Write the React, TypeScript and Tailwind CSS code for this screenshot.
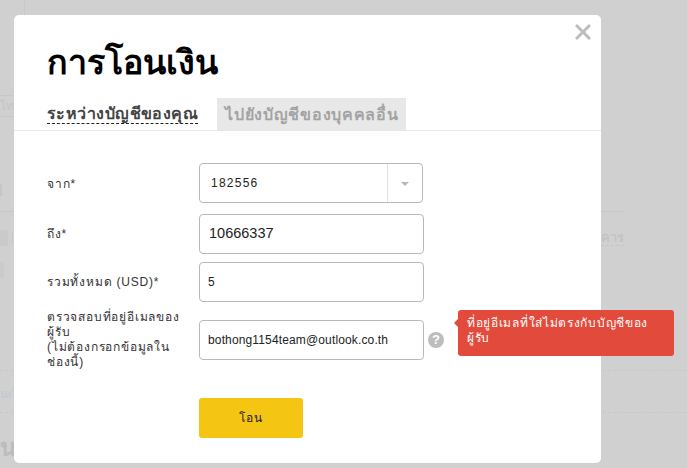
const fields = "flex items-center";
const inputBox = "h-10 rounded-[4px] border border-[#b8b8b4] bg-white flex items-center";

const Backdrop = () => (
  <div className="absolute inset-0 overflow-hidden bg-[#d0d0d0] text-[#c4c4c4]">
    <div className="absolute left-[24px] top-0 h-[15px] w-px bg-[#c8c8c8]" />
    <div className="absolute left-0 top-[95px] h-[22px] w-[14px] border-y border-[#c8c8c8]" />
    <div className="absolute left-0 top-[96px] whitespace-nowrap text-[12px] leading-[20px]">ไทย</div>
    <div className="absolute left-0 top-[184px] h-[12px] w-[2px] bg-[#c6c6c6]" />
    <div className="absolute left-0 top-[211px] h-px w-[14px] bg-[#c8c8c8]" />
    <div className="absolute left-0 top-[230px] h-[16px] w-[8px] rounded-r-[3px] bg-[#cacaca]" />
    <div className="absolute left-[12px] top-[232px] h-[12px] w-px bg-[#c8c8c8]" />
    <div className="absolute left-0 top-[262px] h-[16px] w-[4px] bg-[#cacaca]" />
    <div className="absolute left-0 top-[370px] w-[14px] border-t border-dashed border-[#c8c8c8]" />
    <div className="absolute left-0 top-[385px] whitespace-nowrap text-[12px] text-[#c0c6d6]">นเงิน</div>
    <div className="absolute left-0 top-[412px] w-[14px] border-t border-dashed border-[#c8c8c8]" />
    <div className="absolute left-0 top-[436px] whitespace-nowrap text-[24px] font-bold leading-[24px] text-[#bcbcbc]">นเงิน</div>
    <div className="absolute left-[601px] top-[211px] w-[24px] border-t border-[#c8c8c8]" />
    <div className="absolute left-[601px] top-[231px] border-b border-dashed border-[#c4c4c4] text-[13px] leading-[14px] text-[#c0c0c0]">คาร</div>
    <div className="absolute left-[603px] top-[370px] w-[84px] border-t border-dashed border-[#c8c8c8]" />
    <div className="absolute left-[603px] top-[412px] w-[84px] border-t border-dashed border-[#c8c8c8]" />
  </div>
);

const TransferForm = () => (
  <div className="flex flex-col pl-[33px] pt-[32px]">
    <div className={fields}>
      <label className="w-[152px] pt-[2px] text-[12px] tracking-[0.8px] text-[#333]">จาก*</label>
      <div className={`${inputBox} w-[224px]`}>
        <span className="flex-1 pl-[11px] text-[12px] tracking-[1.25px] text-[#222]">182556</span>
        <span className="flex h-full w-[35px] items-center justify-center border-l border-[#e2e2e2]">
          <span className="mt-px h-0 w-0 border-x-[4px] border-t-[4px] border-x-transparent border-t-[#b5b5b5]" />
        </span>
      </div>
    </div>
    <div className={`${fields} mt-[11px]`}>
      <label className="w-[152px] text-[12px] tracking-[0.8px] text-[#333]">ถึง*</label>
      <div className={`${inputBox} w-[225px]`}>
        <span className="pl-[9px] text-[14.5px] text-[#222]">10666337</span>
      </div>
    </div>
    <div className={`${fields} mt-[8px]`}>
      <label className="w-[152px] text-[12px] tracking-[0.8px] text-[#333]">รวมทั้งหมด (USD)*</label>
      <div className={`${inputBox} w-[225px]`}>
        <span className="pl-[8px] text-[12px] text-[#222]">5</span>
      </div>
    </div>
    <div className={`${fields} mt-[8px]`}>
      <label className="w-[152px] pr-[14px] text-[12px] leading-[15px] tracking-[0.8px] text-[#333]">
        ตรวจสอบที่อยู่อีเมลของผู้รับ
        <br />
        (ไม่ต้องกรอกข้อมูลในช่องนี้)
      </label>
      <div className={`${inputBox} w-[225px]`}>
        <span className="pl-[8px] text-[12px] tracking-[0.14px] text-[#222]">bothong1154team@outlook.co.th</span>
      </div>
      <span className="ml-[4px] flex h-4 w-4 items-center justify-center rounded-full bg-[#bdbdbd] text-[13px] font-bold text-white">?</span>
    </div>
    <button className="ml-[152px] mt-[28px] h-10 w-[104px] rounded-[3px] bg-[#f5c514] text-[12px] tracking-[0.8px] text-[#222]">โอน</button>
  </div>
);

export default function App() {
  return (
    <div className="relative h-[468px] w-[687px] overflow-hidden font-['Liberation_Sans','Noto_Sans',sans-serif]">
      <Backdrop />
      <div className="absolute left-[14px] top-[15px] h-[448px] w-[587px] rounded-[5px] bg-white">
        <svg className="absolute right-[10px] top-[9px] h-4 w-4" viewBox="0 0 16 16">
          <path d="M1 1 15 15M15 1 1 15" stroke="#bdbdbd" strokeWidth="3" />
        </svg>
        <h1 className="pl-[33px] pt-[27px] text-[34px] font-bold leading-[40px] text-black">การโอนเงิน</h1>
        <div className="mt-[15px] flex h-[34px] items-end border-b border-[#e8e8e8] pl-[33px]">
          <span className="mb-[6px] border-b border-dashed border-[#222] text-[16px] font-bold leading-[18px] tracking-[0.45px] text-[#444]">ระหว่างบัญชีของคุณ</span>
          <span className="ml-[19px] flex h-[32px] w-[189px] items-center justify-center bg-[#e8e8e8] pt-[2px] text-[16px] font-bold tracking-[0.7px] text-[#a3a3a3]">ไปยังบัญชีของบุคคลอื่น</span>
        </div>
        <TransferForm />
        {/* error tooltip next to the email field */}
        <div className="absolute left-[444px] top-[295px] h-[46px] w-[216px] rounded-[3px] bg-[#e24a3b] px-[9px] py-[6px] text-[12px] leading-[15px] tracking-[0.7px] text-white">
          <span className="absolute left-[-4px] top-[9px] h-0 w-0 border-y-[4px] border-r-[4px] border-y-transparent border-r-[#e24a3b]" />
          ที่อยู่อีเมลที่ใส่ไม่ตรงกับบัญชีของผู้รับ
        </div>
      </div>
    </div>
  );
}
